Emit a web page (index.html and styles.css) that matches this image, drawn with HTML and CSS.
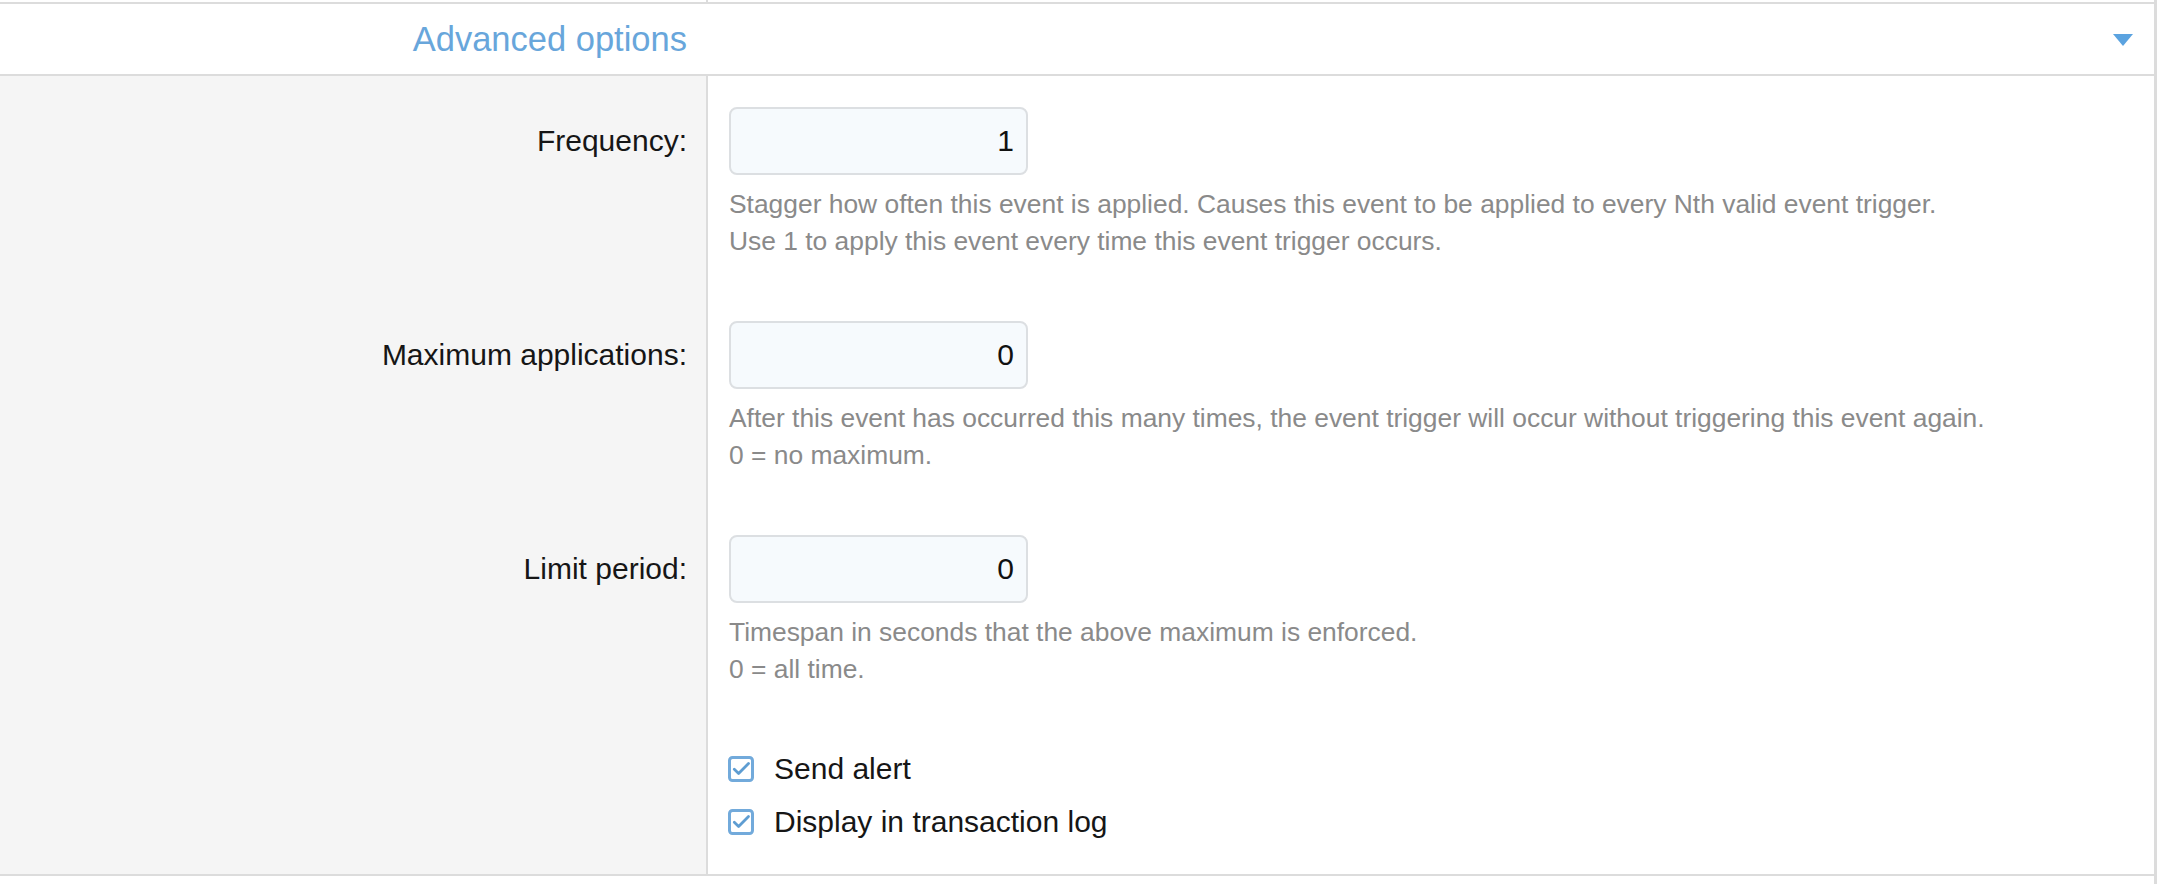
FILE: index.html
```html
<!DOCTYPE html>
<html lang="en">
<head>
    <meta charset="UTF-8">
    <meta name="viewport" content="width=device-width, initial-scale=1.0">
    <title>Advanced options</title>
    <link rel="stylesheet" href="styles.css">
</head>
<body>
    <div class="panel">
        <div class="panel-top">
            <div class="panel-top-left"></div>
            <div></div>
        </div>

        <div class="section-header">
            <div class="section-title">Advanced options</div>
            <div class="section-toggle">
                <svg width="20" height="12" viewBox="0 0 20 12"><path d="M0 0 H20 L10 12 Z" fill="#5ba3e0"/></svg>
            </div>
        </div>

        <div class="section-body">
            <div class="form-row">
                <div class="form-label"><label for="frequency">Frequency:</label></div>
                <div class="form-field">
                    <input class="text-input" id="frequency" type="text" value="1">
                    <div class="help-text">
                        Stagger how often this event is applied. Causes this event to be applied to every Nth valid event trigger.<br>
                        Use 1 to apply this event every time this event trigger occurs.
                    </div>
                </div>
            </div>

            <div class="form-row">
                <div class="form-label"><label for="max-applications">Maximum applications:</label></div>
                <div class="form-field">
                    <input class="text-input" id="max-applications" type="text" value="0">
                    <div class="help-text">
                        After this event has occurred this many times, the event trigger will occur without triggering this event again.<br>
                        0 = no maximum.
                    </div>
                </div>
            </div>

            <div class="form-row">
                <div class="form-label"><label for="limit-period">Limit period:</label></div>
                <div class="form-field">
                    <input class="text-input" id="limit-period" type="text" value="0">
                    <div class="help-text">
                        Timespan in seconds that the above maximum is enforced.<br>
                        0 = all time.
                    </div>
                </div>
            </div>

            <div class="form-row">
                <div class="form-label"></div>
                <div class="form-field checkbox-field">
                    <div class="checkbox-row">
                        <svg class="checkbox" width="26" height="26" viewBox="0 0 26 26">
                            <rect x="1.5" y="1.5" width="23" height="23" rx="3" fill="#fff" stroke="#72aadb" stroke-width="3"/>
                            <path d="M6.3 13.3 L10.6 17.4 L20.5 7.4" fill="none" stroke="#5e9dd2" stroke-width="2.8" stroke-linecap="round" stroke-linejoin="round"/>
                        </svg>
                        <span>Send alert</span>
                    </div>
                    <div class="checkbox-row">
                        <svg class="checkbox" width="26" height="26" viewBox="0 0 26 26">
                            <rect x="1.5" y="1.5" width="23" height="23" rx="3" fill="#fff" stroke="#72aadb" stroke-width="3"/>
                            <path d="M6.3 13.3 L10.6 17.4 L20.5 7.4" fill="none" stroke="#5e9dd2" stroke-width="2.8" stroke-linecap="round" stroke-linejoin="round"/>
                        </svg>
                        <span>Display in transaction log</span>
                    </div>
                </div>
            </div>
        </div>
    </div>
</body>
</html>
```

FILE: styles.css
```css
body {
    font-family: "Liberation Sans", Arial, Helvetica, sans-serif;
    margin: 0;
    padding: 0;
    background-color: #fff;
    color: #1a1a1a;
    height: 884px;
    overflow: hidden;
}

.panel {
    width: 2154px;
    height: 884px;
    border-right: 3px solid #dcdcdc;
}

.panel-top {
    display: grid;
    grid-template-columns: 708px 1fr;
    height: 2px;
}

.panel-top-left {
    border-right: 2px solid #dcdcdc;
}

.section-header {
    display: grid;
    grid-template-columns: 708px 1fr;
    height: 70px;
    border-top: 2px solid #dcdcdc;
    border-bottom: 2px solid #dcdcdc;
    background-color: #fff;
}

.section-title {
    font-size: 34.5px;
    line-height: 70px;
    color: #68a6db;
    text-align: right;
    padding-right: 21px;
}

.section-toggle {
    display: flex;
    align-items: center;
    justify-content: flex-end;
    padding-right: 21px;
    padding-top: 1px;
}

.section-body {
    border-bottom: 2px solid #dcdcdc;
}

.form-row {
    display: grid;
    grid-template-columns: 708px 1fr;
}

.form-label {
    background-color: #f5f5f5;
    border-right: 2px solid #dcdcdc;
    padding: 31px 19px 0 0;
    text-align: right;
    font-size: 30px;
    line-height: 68px;
    color: #161616;
}

.form-field {
    padding: 31px 0 30px 21px;
}

.text-input {
    display: block;
    box-sizing: border-box;
    width: 299px;
    height: 68px;
    margin: 0;
    padding: 0 12px;
    border: 2px solid #dcdfe2;
    border-radius: 8px;
    background-color: #f6fafd;
    font-family: "Liberation Sans", Arial, Helvetica, sans-serif;
    font-size: 30px;
    color: #111;
    text-align: right;
    outline: none;
}

.help-text {
    margin-top: 11px;
    font-size: 26.4px;
    line-height: 37px;
    color: #8a8a8a;
}

.checkbox-field {
    padding: 24px 0 26px 20px;
}

.checkbox-row {
    display: flex;
    align-items: center;
    height: 53px;
    font-size: 30px;
    color: #161616;
}

.checkbox {
    flex: none;
    margin-right: 20px;
}
```
